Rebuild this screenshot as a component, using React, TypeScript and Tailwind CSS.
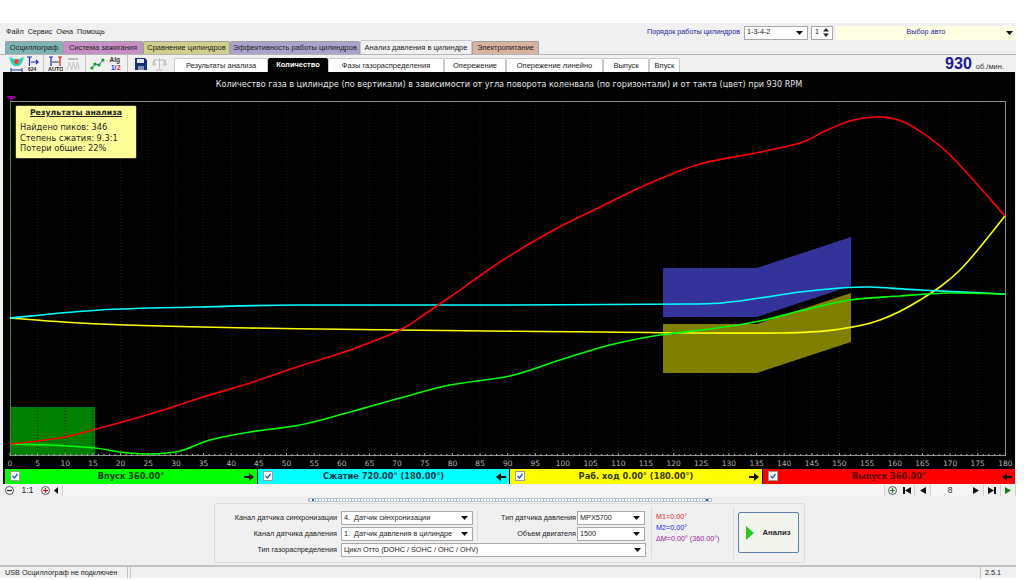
import { ReactNode } from 'react';

const UI_FONT = "font-['Liberation_Sans',sans-serif]";
const PLOT_FONT = "font-['DejaVu_Sans',sans-serif]";

const MAIN_TABS = [
  { label: 'Осциллограф', w: 'w-[58px]', bg: 'bg-[#7fb3b5]' },
  { label: 'Система зажигания', w: 'w-[80px]', bg: 'bg-[#c690c4]' },
  { label: 'Сравнение цилиндров', w: 'w-[87px]', bg: 'bg-[#cfcf8e]' },
  { label: 'Эффективность работы цилиндров', w: 'w-[130px]', bg: 'bg-[#aaa3cb]' },
  { label: 'Анализ давления в цилиндре', w: 'w-[112px]', bg: 'bg-[#f0f0f0]', active: true },
  { label: 'Электропитание', w: 'w-[67px]', bg: 'bg-[#d9b3a0]' },
];

const SUB_TABS = [
  { label: 'Результаты анализа', w: 'w-[94px]' },
  { label: 'Количество', w: 'w-[60px]', active: true },
  { label: 'Фазы газораспределения', w: 'w-[116px]' },
  { label: 'Опережение', w: 'w-[62px]' },
  { label: 'Опережение линейно', w: 'w-[97px]' },
  { label: 'Выпуск', w: 'w-[46px]' },
  { label: 'Впуск', w: 'w-[31px]' },
];

const STAGES = [
  { label: 'Впуск 360.00°', w: 'w-[252px]', bg: 'bg-[#00ff00]', text: 'text-[#064006]', dir: 'right' },
  { label: 'Сжатие 720.00° (180.00°)', w: 'w-[251px]', bg: 'bg-[#00ffff]', text: 'text-[#053a4a]', dir: 'left' },
  { label: 'Раб. ход 0.00° (180.00°)', w: 'w-[252px]', bg: 'bg-[#ffff00]', text: 'text-[#3a3a00]', dir: 'right' },
  { label: 'Выпуск 360.00°', w: 'w-[252px]', bg: 'bg-[#ff0000]', text: 'text-[#5a0000]', dir: 'left' },
];

type Pt = [number, number];

const RED: Pt[] = [[10, 444], [60, 438], [100, 428], [150, 414], [200, 398], [250, 383], [300, 366], [350, 350], [400, 330], [425, 314], [450, 297], [500, 262], [550, 232], [600, 207], [650, 183], [700, 164], [750, 154], [800, 143], [825, 131], [850, 121], [875, 117], [895, 119], [915, 128], [950, 155], [1005, 216]];
const GREEN: Pt[] = [[10, 444], [50, 445], [95, 448], [120, 452], [150, 454], [180, 451], [210, 440], [250, 432], [300, 425], [350, 412], [400, 398], [450, 385], [510, 376], [560, 360], [610, 345], [660, 335], [710, 329], [760, 321], [800, 311], [850, 300], [900, 296], [950, 293], [1005, 294]];
const CYAN: Pt[] = [[10, 318], [100, 310], [200, 307], [300, 305], [500, 305], [690, 304], [730, 302], [760, 298], [800, 292], [840, 288], [870, 287], [920, 290], [1005, 294]];
const YELLOW: Pt[] = [[10, 318], [100, 324], [250, 328], [400, 330], [600, 332], [780, 333], [840, 329], [880, 320], [920, 300], [960, 270], [1005, 216]];

const degToX = (deg: number) => 10 + deg * 5.53;

// catmull-rom through the points, so the curves have no corners
const smooth = (pts: Pt[]) => {
  let d = `M${pts[0][0]} ${pts[0][1]}`;
  for (let i = 0; i < pts.length - 1; i++) {
    const p0 = pts[Math.max(i - 1, 0)];
    const p1 = pts[i];
    const p2 = pts[i + 1];
    const p3 = pts[Math.min(i + 2, pts.length - 1)];
    const c1x = p1[0] + (p2[0] - p0[0]) / 6;
    const c1y = p1[1] + (p2[1] - p0[1]) / 6;
    const c2x = p2[0] - (p3[0] - p1[0]) / 6;
    const c2y = p2[1] - (p3[1] - p1[1]) / 6;
    d += `C${c1x} ${c1y} ${c2x} ${c2y} ${p2[0]} ${p2[1]}`;
  }
  return d;
};

const Caret = () => (
  <svg width="7" height="4" viewBox="0 0 7 4" className="shrink-0">
    <path d="M0 0h7L3.500 4z" fill="#111" />
  </svg>
);

const Select = ({ value, className }: { value: string; className: string }) => (
  <div className={`flex h-[14px] items-center justify-between border border-[#a8a8a8] bg-white pl-[2px] pr-[4px] text-[7.250px] text-[#222] ${className}`}>
    <span className="whitespace-pre">{value}</span>
    <Caret />
  </div>
);

const Field = ({ label, labelW, children }: { label: string; labelW: string; children: ReactNode }) => (
  <div className="flex h-[14px] items-center">
    <span className={`pr-[1px] text-right whitespace-nowrap ${labelW}`}>{label}</span>
    {children}
  </div>
);

const Sep = () => <div className="mx-[3px] h-[17px] w-px bg-[#c4c4c4]" />;

const Tool = ({ children, className = 'w-[18px]' }: { children: ReactNode; className?: string }) => (
  <div className={`flex h-[18px] items-center justify-center ${className}`}>{children}</div>
);

const Toolbar = () => (
  <div className="flex w-[170px] items-center pl-[7px]">
    <Tool>
      <svg width="17" height="16" viewBox="0 0 17 16">
        <path d="M1 1l5 2h5l5-2-2 6-3 3H6L3 7z" fill="#2fd0bd" />
        <circle cx="8.500" cy="5.500" r="2.500" fill="#e2483f" />
        <path d="M3 14h11M3 12v4M14 12v4" stroke="#2233bb" strokeWidth="1" fill="none" />
      </svg>
    </Tool>
    <Tool className="w-[15px]">
      <svg width="14" height="15" viewBox="0 0 14 15">
        <path d="M1 1h5M3.500 1v9M5 6h7M10 4l2 2-2 2" stroke="#1c2bc4" strokeWidth="1.200" fill="none" />
        <text x="2" y="14.500" fontSize="5" fontWeight="700" fill="#222">624</text>
      </svg>
    </Tool>
    <Sep />
    <Tool className="w-[17px]">
      <svg width="15" height="16" viewBox="0 0 15 16">
        <path d="M1 1h4M3 1v9" stroke="#1c2bc4" strokeWidth="1.200" fill="none" />
        <path d="M10 1h4M12 1v9" stroke="#d02020" strokeWidth="1.200" fill="none" />
        <path d="M4 6h7" stroke="#333" strokeWidth="1" />
        <text x="0" y="15" fontSize="5.500" fontWeight="700" fill="#222">AUTO</text>
      </svg>
    </Tool>
    <Tool>
      <svg width="14" height="14" viewBox="0 0 14 14">
        <path d="M2 1h10v2H2z" fill="#bdbdbd" />
        <path d="M1 13l2.500-8 2 8 2-8 2 8 2-8 1.500 8" stroke="#c6c6c6" fill="none" />
      </svg>
    </Tool>
    <Sep />
    <Tool className="w-[17px]">
      <svg width="15" height="14" viewBox="0 0 15 14">
        <path d="M2 11l3-4 4 1 4-5" stroke="#1d6bd0" fill="none" />
        <g fill="#10a010">
          <circle cx="2" cy="11" r="1.600" />
          <circle cx="5" cy="7" r="1.600" />
          <circle cx="9" cy="8" r="1.600" />
          <circle cx="13" cy="3" r="1.600" />
        </g>
      </svg>
    </Tool>
    <Tool>
      <svg width="13" height="17" viewBox="0 0 13 17">
        <text x="0.500" y="7" fontSize="6.500" fontWeight="700" fill="#333">Alg</text>
        <text x="2" y="15" fontSize="6.500" fontWeight="700" fill="#1a2eb0">1/</text>
        <text x="8" y="15" fontSize="6.500" fontWeight="700" fill="#d02020">2</text>
      </svg>
    </Tool>
    <Sep />
    <Tool className="w-[19px]">
      <svg width="12" height="12" viewBox="0 0 12 12">
        <path d="M0 0h10l2 2v10H0z" fill="#16306e" />
        <path d="M2 1h7v4H2z" fill="#dfe6f2" />
        <path d="M3 8h6v4H3z" fill="#7f90b5" />
      </svg>
    </Tool>
    <Tool>
      <svg width="15" height="14" viewBox="0 0 15 14">
        <path d="M7.500 1v11M4 13h7M2 3h11M2 3L0.500 8h3zM13 3l-1.500 5h3z" stroke="#bcbcbc" fill="#e6e6e6" />
      </svg>
    </Tool>
  </div>
);

const Chart = () => {
  const minorTicks = Array.from({ length: 181 }, (_, i) => i);
  const labels = Array.from({ length: 37 }, (_, i) => i * 5);

  return (
    <svg width="1012" height="373" viewBox="3 96 1012 373" className="block shrink-0">
      <path d="M6 96h11l-5.500 5z" fill="#8a008a" />
      <rect x="10" y="407" width="85" height="49" fill="#008000" />
      {labels.map(deg => (
        <line key={deg} x1={degToX(deg)} y1="102" x2={degToX(deg)} y2="455" stroke="#222200" strokeDasharray="1 2" />
      ))}
      <polygon points="663,268 757,268 851,237 851,286 757,317 663,317" fill="#333399" />
      <polygon points="663,324 757,324 851,293 851,342 757,373 663,373" fill="#808000" />
      <rect x="10.500" y="101.500" width="995" height="354" fill="none" stroke="#8c8c8c" />
      <line x1="10.500" y1="102" x2="10.500" y2="456" stroke="#3d8a3d" />
      {minorTicks.map(deg => (
        <line key={deg} x1={degToX(deg)} y1={deg % 5 === 0 ? 453 : 454} x2={degToX(deg)} y2="456" stroke="#b0b0b0" />
      ))}
      <path d={smooth(YELLOW)} fill="none" stroke="#ffff00" strokeWidth="1.600" />
      <path d={smooth(CYAN)} fill="none" stroke="#00ffff" strokeWidth="1.600" />
      <path d={smooth(GREEN)} fill="none" stroke="#00ff00" strokeWidth="1.600" />
      <path d={smooth(RED)} fill="none" stroke="#ff0000" strokeWidth="1.600" />
      {labels.map(deg => (
        <text key={deg} x={degToX(deg)} y="466" textAnchor="middle" fontSize="7.500" fill="#b4b4b4" fontFamily="DejaVu Sans, sans-serif">
          {deg}
        </text>
      ))}
    </svg>
  );
};

const StageBar = ({ label, w, bg, text, dir }: (typeof STAGES)[number]) => (
  <div className={`relative flex h-[15px] items-center justify-center ${w} ${bg}`}>
    <div className="absolute left-[5px] top-[2px] flex h-[10px] w-[10px] items-center justify-center border border-[#9a9a9a] bg-white">
      <svg width="8" height="8" viewBox="0 0 8 8">
        <path d="M1.500 4l2 2 3-4" stroke="#1f5fd0" strokeWidth="1.400" fill="none" />
      </svg>
    </div>
    <span className={`${PLOT_FONT} text-[8.250px] font-bold whitespace-nowrap ${text}`}>{label}</span>
    <svg width="10" height="8" viewBox="0 0 10 8" className="absolute right-[3px] top-[4px]">
      <path d={dir === 'right' ? 'M0 3h5V0l5 4-5 4V5H0z' : 'M10 3H5V0L0 4l5 4V5h5z'} fill="#111" />
    </svg>
  </div>
);

const RoundBtn = ({ color, plus }: { color: string; plus?: boolean }) => (
  <svg width="9" height="9" viewBox="0 0 9 9" className="shrink-0">
    <circle cx="4.500" cy="4.500" r="4" fill="#f4f4f4" stroke="#555" />
    <path d={plus ? 'M2 4.500h5M4.500 2v5' : 'M2 4.500h5'} stroke={color} strokeWidth="1.200" />
  </svg>
);

const NavBtn = ({ d, fill = '#111', w }: { d: string; fill?: string; w: string }) => (
  <div className={`flex h-[12px] items-center justify-center border-r border-[#d0d0d0] ${w}`}>
    <svg width="8" height="7" viewBox="0 0 8 7">
      <path d={d} fill={fill} />
    </svg>
  </div>
);

const App = () => {
  return (
    <div className={`h-[580px] w-[1024px] overflow-hidden bg-white pt-[23px] ${UI_FONT}`}>
      <div className="flex h-[555px] w-[1016px] flex-col bg-[#f0f0f0]">
        {/* menu and top controls */}
        <div className="flex h-[17px] shrink-0 items-center pl-[6px] pt-[2px] text-[7.200px] text-[#222]">
          <div className="flex gap-[4px]">
            <span>Файл</span>
            <span>Сервис</span>
            <span>Окна</span>
            <span>Помощь</span>
          </div>
          <span className="ml-auto text-[#24249a]">Порядок работы цилиндров</span>
          <Select value="1-3-4-2" className="ml-[4px] w-[64px]" />
          <div className="ml-[3px] flex h-[14px] w-[22px] items-center justify-between border border-[#a8a8a8] bg-white px-[3px]">
            <span>1</span>
            <svg width="6" height="9" viewBox="0 0 6 9">
              <path d="M3 0l3 3.500H0zM3 9L0 5.500h6z" fill="#222" />
            </svg>
          </div>
          <div className="relative ml-[3px] flex h-[14px] w-[180px] items-center justify-center bg-[#ffffe3] text-[#24249a]">
            Выбор авто
            <div className="absolute right-[3px] top-[5px]">
              <Caret />
            </div>
          </div>
        </div>

        {/* main tabs */}
        <div className="flex h-[14px] shrink-0 items-end pl-[5px] text-[7.500px] text-[#222]">
          {MAIN_TABS.map(tab => (
            <div
              key={tab.label}
              className={`flex items-center justify-center rounded-t-[2px] border border-b-0 border-[#a0a0a0] whitespace-nowrap ${tab.w} ${tab.bg} ${tab.active ? 'h-[14px] border-[#c8c8c8]' : 'h-[13px]'}`}
            >
              {tab.label}
            </div>
          ))}
        </div>

        {/* toolbar and sub tabs */}
        <div className="flex h-[18px] shrink-0 items-end border-t border-[#b5b5b5]">
          <div className="self-center">
            <Toolbar />
          </div>
          <div className="ml-[4px] flex text-[7.500px] text-[#222]">
            {SUB_TABS.map(tab => (
              <div
                key={tab.label}
                className={`flex h-[14px] items-center justify-center rounded-t-[2px] whitespace-nowrap ${tab.w} ${tab.active ? 'bg-black font-bold text-white' : 'border border-b-0 border-[#c8c8c8] bg-white'}`}
              >
                {tab.label}
              </div>
            ))}
          </div>
          <div className="ml-auto mr-[12px] flex items-baseline gap-[4px] text-[#1a1a8c]">
            <span className="text-[16px] leading-[17px] font-bold">930</span>
            <span className="text-[7.500px] text-[#333]">об./мин.</span>
          </div>
        </div>

        {/* plot */}
        <div className="relative ml-[3px] flex h-[412px] w-[1012px] shrink-0 flex-col bg-black">
          <div className={`flex h-[24px] shrink-0 items-center justify-center pt-[1px] text-[8.100px] text-[#e8e8e8] ${PLOT_FONT}`}>
            Количество газа в цилиндре (по вертикали) в зависимости от угла поворота коленвала (по горизонтали) и от такта (цвет) при 930 RPM
          </div>
          <Chart />
          <div className="flex gap-[1px] pl-[2px]">
            {STAGES.map(stage => (
              <StageBar key={stage.label} {...stage} />
            ))}
          </div>
          <div className={`absolute left-[12px] top-[33px] h-[54px] w-[122px] rounded-[2px] border border-[#333] bg-[#ffff99] px-[4px] pt-[1px] text-[8.250px] leading-[10.500px] text-[#222] ${PLOT_FONT}`}>
            <div className="mb-[3px] text-center text-[7.800px] leading-[12px] font-bold underline">Результаты анализа</div>
            <div>Найдено пиков: 346</div>
            <div>Степень сжатия: 9.3:1</div>
            <div>Потери общие: 22%</div>
          </div>
        </div>

        {/* zoom and scroll row */}
        <div className="flex h-[12px] shrink-0 items-center pl-[5px] text-[8.500px] text-[#222]">
          <RoundBtn color="#222" />
          <span className="w-[27px] text-center">1:1</span>
          <RoundBtn color="#c01010" plus />
          <svg width="5" height="7" viewBox="0 0 5 7" className="ml-[4px]">
            <path d="M4 0v7L0 3.500z" fill="#111" />
          </svg>
          <div className="ml-[3px] h-[11px] flex-1 border-x border-[#d0d0d0] bg-[#f6f6f6]" />
          <div className="mx-[3px]">
            <RoundBtn color="#108010" plus />
          </div>
          <NavBtn w="w-[15px]" d="M0 0h2v7H0zM8 0v7L2 3.500z" />
          <NavBtn w="w-[16px]" d="M7 0v7L1 3.500z" />
          <div className="w-[38px] bg-[#f6f6f6] text-center">8</div>
          <NavBtn w="w-[15px]" d="M1 0v7l6-3.500z" />
          <NavBtn w="w-[17px]" d="M0 0v7l6-3.500zM6 0h2v7H6z" />
          <NavBtn w="w-[15px]" d="M1 0v7l6-3.500z" fill="#108010" />
        </div>

        {/* splitter */}
        <div className="mt-[2px] ml-[308px] flex h-[4px] w-[404px] shrink-0 items-center justify-between border border-[#b8c4d4] bg-[repeating-linear-gradient(90deg,#9db8e0_0,#9db8e0_1px,#ffffff_1px,#ffffff_3px)] px-[3px]">
          <div className="h-[2px] w-[2px] bg-[#2a62c0]" />
          <div className="h-[2px] w-[2px] bg-[#2a62c0]" />
        </div>

        {/* analysis panel */}
        <div className="mt-[1px] ml-[214px] flex h-[60px] w-[591px] shrink-0 rounded-[2px] border border-[#dcdcdc] text-[7.250px] text-[#222]">
          <div className="flex w-[436px] flex-col gap-[2px] pl-[2px] pt-[7px]">
            <div className="flex">
              <div className="flex flex-col gap-[2px]">
                <Field label="Канал датчика синхронизации" labelW="w-[124px] pr-[4px]">
                  <Select value="4.  Датчик синхронизации" className="w-[132px]" />
                </Field>
                <Field label="Канал датчика давления" labelW="w-[124px] pr-[4px]">
                  <Select value="1.  Датчик давления в цилиндре" className="w-[132px]" />
                </Field>
              </div>
              <div className="ml-[4px] h-[30px] w-px bg-[#dcdcdc]" />
              <div className="flex flex-col gap-[2px]">
                <Field label="Тип датчика давления" labelW="w-[99px]">
                  <Select value="MPX5700" className="w-[68px]" />
                </Field>
                <Field label="Объем двигателя" labelW="w-[99px]">
                  <Select value="1500" className="w-[68px]" />
                </Field>
              </div>
            </div>
            <Field label="Тип газораспределения" labelW="w-[124px] pr-[4px]">
              <Select value="Цикл Отто (DOHC / SOHC / OHC / OHV)" className="w-[305px]" />
            </Field>
          </div>
          <div className="my-[3px] w-px bg-[#dcdcdc]" />
          <div className="w-[81px] pt-[7px] pl-[4px] text-[7.200px] leading-[11px] whitespace-nowrap">
            <div className="text-[#ee2222]">M1=0.00°</div>
            <div className="text-[#2222ee]">M2=0.00°</div>
            <div className="text-[#a020a0]">ΔM=0.00° (360.00°)</div>
          </div>
          <div className="my-[3px] w-px bg-[#dcdcdc]" />
          <div className="mt-[8px] ml-[4px] flex h-[41px] w-[61px] items-center justify-center gap-[9px] rounded-[2px] border border-[#5a7fa8] bg-[#f4f4ee] pr-[1px]">
            <svg width="8" height="14" viewBox="0 0 8 14">
              <path d="M0 0l8 7-8 7z" fill="#22cc22" />
            </svg>
            <span className="text-[7.700px] font-bold">Анализ</span>
          </div>
        </div>

        <div className="mt-[2px] h-[2px] shrink-0 bg-[#c4c4c4]" />

        {/* status bar */}
        <div className="flex h-[10px] flex-1 text-[7.250px] leading-[11px] text-[#222]">
          <div className="w-[128px] border-r border-[#c0c0c0] pl-[5px] whitespace-nowrap">USB Осциллограф не подключен</div>
          <div className="ml-[2px] flex-1 border-x border-[#c0c0c0]" />
          <div className="ml-[2px] w-[33px] pl-[2px]">2.5.1</div>
        </div>
      </div>
    </div>
  );
};

export default App;
